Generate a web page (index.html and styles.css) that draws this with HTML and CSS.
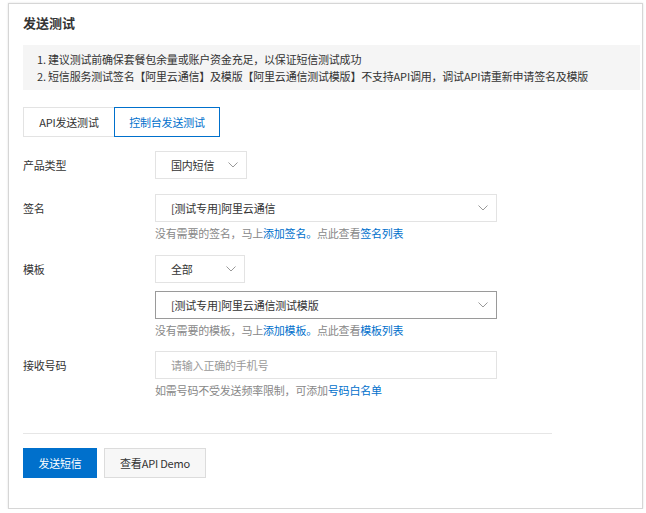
FILE: index.html
```html
<!DOCTYPE html>
<html lang="zh-CN">
<head>
<meta charset="utf-8">
<title>发送测试</title>
<link rel="stylesheet" href="styles.css">
</head>
<body>
<div class="card">
  <h2 class="title">发送测试</h2>
  <div class="notice">
    <p>1. 建议测试前确保套餐包余量或账户资金充足，以保证短信测试成功</p>
    <p>2. 短信服务测试签名【阿里云通信】及模版【阿里云通信测试模版】不支持API调用，调试API请重新申请签名及模版</p>
  </div>
  <div class="tabs">
    <div class="tab">API发送测试</div>
    <div class="tab active">控制台发送测试</div>
  </div>

  <div class="row row-type">
    <div class="label">产品类型</div>
    <div class="field">
      <div class="select small">
        <span>国内短信</span>
        <svg class="arrow" width="10" height="6" viewBox="0 0 10 6"><path d="M0.5 0.5 L5 5 L9.5 0.5" fill="none" stroke="#999" stroke-width="1"/></svg>
      </div>
    </div>
  </div>

  <div class="row row-sign">
    <div class="label">签名</div>
    <div class="field">
      <div class="select wide">
        <span>[测试专用]阿里云通信</span>
        <svg class="arrow" width="10" height="6" viewBox="0 0 10 6"><path d="M0.5 0.5 L5 5 L9.5 0.5" fill="none" stroke="#999" stroke-width="1"/></svg>
      </div>
      <div class="help">没有需要的签名，马上<a>添加签名。</a>点此查看<a>签名列表</a></div>
    </div>
  </div>

  <div class="row row-tpl">
    <div class="label">模板</div>
    <div class="field">
      <div class="select small">
        <span>全部</span>
        <svg class="arrow" width="10" height="6" viewBox="0 0 10 6"><path d="M0.5 0.5 L5 5 L9.5 0.5" fill="none" stroke="#999" stroke-width="1"/></svg>
      </div>
      <div class="select wide focused">
        <span>[测试专用]阿里云通信测试模版</span>
        <svg class="arrow" width="10" height="6" viewBox="0 0 10 6"><path d="M0.5 0.5 L5 5 L9.5 0.5" fill="none" stroke="#999" stroke-width="1"/></svg>
      </div>
      <div class="help">没有需要的模板，马上<a>添加模板。</a>点此查看<a>模板列表</a></div>
    </div>
  </div>

  <div class="row row-phone">
    <div class="label">接收号码</div>
    <div class="field">
      <div class="input wide"><span class="placeholder">请输入正确的手机号</span></div>
      <div class="help">如需号码不受发送频率限制，可添加<a>号码白名单</a></div>
    </div>
  </div>

  <div class="divider"></div>

  <div class="actions">
    <button class="btn primary">发送短信</button>
    <button class="btn">查看API Demo</button>
  </div>
</div>
</body>
</html>
```
FILE: styles.css
```css
* { box-sizing: border-box; }
html, body { margin: 0; padding: 0; background: #fff; }
body {
  font-family: "Noto Sans CJK SC", "Noto Sans", "Liberation Sans", sans-serif;
  font-size: 11px;
  letter-spacing: -0.2px;
  color: #333;
}
.card {
  margin: 3px 0 0 8px;
  width: 635px;
  height: 506px;
  border: 1px solid #d6d6d6;
  box-shadow: 0 0 2px rgba(0,0,0,0.12);
  padding: 9px 2px 0 14px;
  background: #fff;
}
.title {
  margin: 0;
  font-size: 13px;
  font-weight: bold;
  letter-spacing: 0;
  line-height: 20px;
  color: #333;
}
.notice {
  margin-top: 12px;
  background: #f5f5f5;
  padding: 6px 14px 5px;
}
.notice p {
  margin: 0;
  line-height: 17px;
  color: #333;
}
.tabs {
  display: flex;
  margin-top: 17px;
}
.tab {
  height: 30px;
  line-height: 28px;
  border: 1px solid #e3e3e3;
  text-align: center;
  color: #333;
}
.tab:first-child { width: 91px; border-right: none; }
.tab.active { width: 106px; border-color: #0070cc; color: #0070cc; }
.row {
  display: flex;
  align-items: flex-start;
}
.row-type { margin-top: 14px; }
.row-sign { margin-top: 15px; }
.row-tpl { margin-top: 14px; }
.row-phone { margin-top: 13px; }
.label {
  width: 132px;
  line-height: 28px;
  color: #333;
}
.field { display: flex; flex-direction: column; align-items: flex-start; }
.select, .input {
  height: 28px;
  border: 1px solid #e3e3e3;
  display: flex;
  align-items: center;
  justify-content: space-between;
  padding: 0 8px 0 15px;
  background: #fff;
}
.select.small { width: 92px; }
.row-tpl .select.small { width: 90px; }
.select.wide, .input.wide { width: 342px; }
.select.focused { border-color: #9a9a9a; margin-top: 8px; }
.arrow { display: block; flex: none; }
.placeholder { color: #999; }
.help {
  margin-top: 3px;
  line-height: 16px;
  color: #888;
}
.help a { color: #0070cc; }
.divider {
  margin-top: 35px;
  width: 529px;
  height: 1px;
  background: #e6e6e6;
}
.actions {
  display: flex;
  gap: 7px;
  margin-top: 14px;
}
.btn {
  font-family: inherit;
  font-size: 11px;
  letter-spacing: -0.2px;
  height: 30px;
  border: 1px solid #dcdcdc;
  background: #f7f7f7;
  color: #333;
  padding: 0;
  width: 102px;
  cursor: pointer;
}
.btn.primary {
  width: 74px;
  background: #0070cc;
  border-color: #0070cc;
  color: #fff;
}
```
